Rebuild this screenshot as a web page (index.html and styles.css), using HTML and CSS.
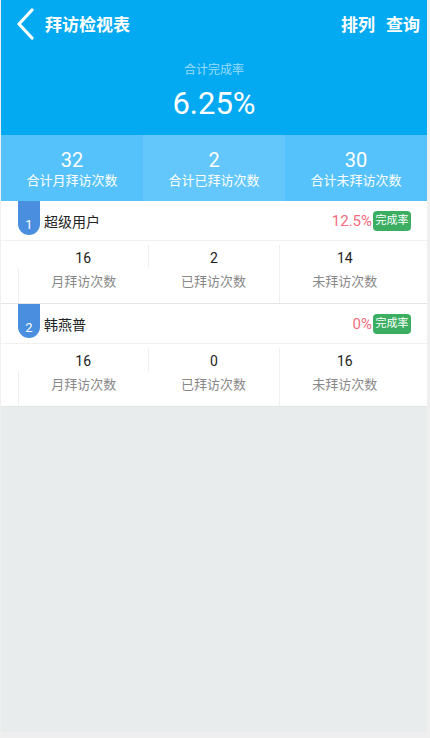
FILE: index.html
```html
<!DOCTYPE html>
<html lang="zh-CN">
<head>
  <meta charset="UTF-8">
  <meta name="viewport" content="width=device-width, initial-scale=1.0">
  <title>拜访检视表</title>
  <link rel="stylesheet" href="styles.css">
</head>
<body>
  <div class="app">
    <div class="cabecalho">
      <div class="topbar">
        <svg class="voltar" width="20" height="32" viewBox="0 0 20 32">
          <path d="M16 2 L3 16 L16 30" fill="none" stroke="#fff" stroke-width="3.2" stroke-linecap="round" stroke-linejoin="round"/>
        </svg>
        <span class="titulo">拜访检视表</span>
        <span class="acao">排列</span>
        <span class="acao">查询</span>
      </div>
      <div class="resumo">
        <div class="resumo-label">合计完成率</div>
        <div class="resumo-valor">6.25%</div>
      </div>
    </div>

    <div class="totais">
      <div class="total t1"><div class="total-num">32</div><div class="total-label">合计月拜访次数</div></div>
      <div class="total t2"><div class="total-num">2</div><div class="total-label">合计已拜访次数</div></div>
      <div class="total t3"><div class="total-num">30</div><div class="total-label">合计未拜访次数</div></div>
    </div>

    <div class="card">
      <div class="card-head">
        <div class="badge">1</div>
        <div class="nome">超级用户</div>
        <div class="pct">12.5%</div>
        <div class="tag">完成率</div>
      </div>
      <div class="card-stats">
        <div class="col c1"><div class="num">16</div><div class="lbl">月拜访次数</div></div>
        <div class="col c2"><div class="num">2</div><div class="lbl">已拜访次数</div></div>
        <div class="col c3"><div class="num">14</div><div class="lbl">未拜访次数</div></div>
      </div>
    </div>

    <div class="card">
      <div class="card-head">
        <div class="badge">2</div>
        <div class="nome">韩燕普</div>
        <div class="pct">0%</div>
        <div class="tag">完成率</div>
      </div>
      <div class="card-stats">
        <div class="col c1"><div class="num">16</div><div class="lbl">月拜访次数</div></div>
        <div class="col c2"><div class="num">0</div><div class="lbl">已拜访次数</div></div>
        <div class="col c3"><div class="num">16</div><div class="lbl">未拜访次数</div></div>
      </div>
    </div>
  </div>
</body>
</html>
```

FILE: styles.css
```css
body {
  margin: 0;
  background-color: #efefef;
  font-family: Roboto, "Noto Sans CJK SC", sans-serif;
}
.app {
  width: 426px;
  height: 732px;
  margin-left: 1px;
  background-color: #e8ecec;
  overflow: hidden;
}
.cabecalho {
  background-color: #03aaf2;
  height: 135px;
  color: white;
}
.topbar {
  height: 46px;
  display: flex;
  align-items: center;
  padding: 0 7px 0 15px;
}
.voltar {
  margin-top: 1px;
}
.titulo {
  font-size: 17px;
  font-weight: bold;
  margin-left: 9px;
  flex: 1;
}
.acao {
  font-size: 17px;
  font-weight: bold;
  margin-left: 11px;
}
.resumo {
  text-align: center;
}
.resumo-label {
  margin-top: 14px;
  font-size: 12px;
  color: rgba(255,255,255,0.6);
}
.resumo-valor {
  margin-top: 9px;
  font-size: 31px;
  line-height: 36px;
}
.totais {
  display: flex;
  height: 66px;
  color: white;
}
.total {
  flex: 1;
  text-align: center;
}
.t1, .t3 {
  background-color: #55c2fb;
}
.t2 {
  background-color: #63c7fb;
}
.total-num {
  font-size: 20px;
  margin-top: 13px;
  line-height: 24px;
}
.total-label {
  font-size: 13px;
  line-height: 18px;
}
.card {
  background-color: white;
  border-bottom: 1px solid #e3e6e6;
}
.card-head {
  height: 39px;
  display: flex;
  align-items: center;
  padding-right: 16px;
  border-bottom: 1px solid #f0f0f0;
}
.badge {
  align-self: flex-start;
  margin-left: 17px;
  width: 22px;
  height: 34px;
  box-sizing: border-box;
  border-radius: 0 0 11px 11px;
  background-color: #4a8fdf;
  color: white;
  font-size: 13px;
  display: flex;
  align-items: flex-end;
  justify-content: center;
  padding-bottom: 3px;
}
.nome {
  margin-left: 4px;
  font-size: 14px;
  color: #222;
  flex: 1;
}
.pct {
  font-size: 15px;
  color: #f56b7e;
}
.tag {
  margin-left: 1px;
  width: 38px;
  height: 20px;
  line-height: 20px;
  text-align: center;
  border-radius: 4px;
  background-color: #3bae62;
  color: white;
  font-size: 11px;
}
.card-stats {
  display: flex;
  padding: 4px 17px 0;
}
.col {
  flex: 1;
  text-align: center;
}
.num {
  font-size: 14px;
  color: #222;
  line-height: 20px;
  padding-top: 3px;
}
.lbl {
  font-size: 13px;
  color: #888;
  line-height: 20px;
  padding: 4px 0 11px;
}
.c1 .lbl, .c2 .num {
  border-left: 1px solid #eef0f0;
}
.c3 {
  border-left: 1px solid #eef0f0;
}
```
